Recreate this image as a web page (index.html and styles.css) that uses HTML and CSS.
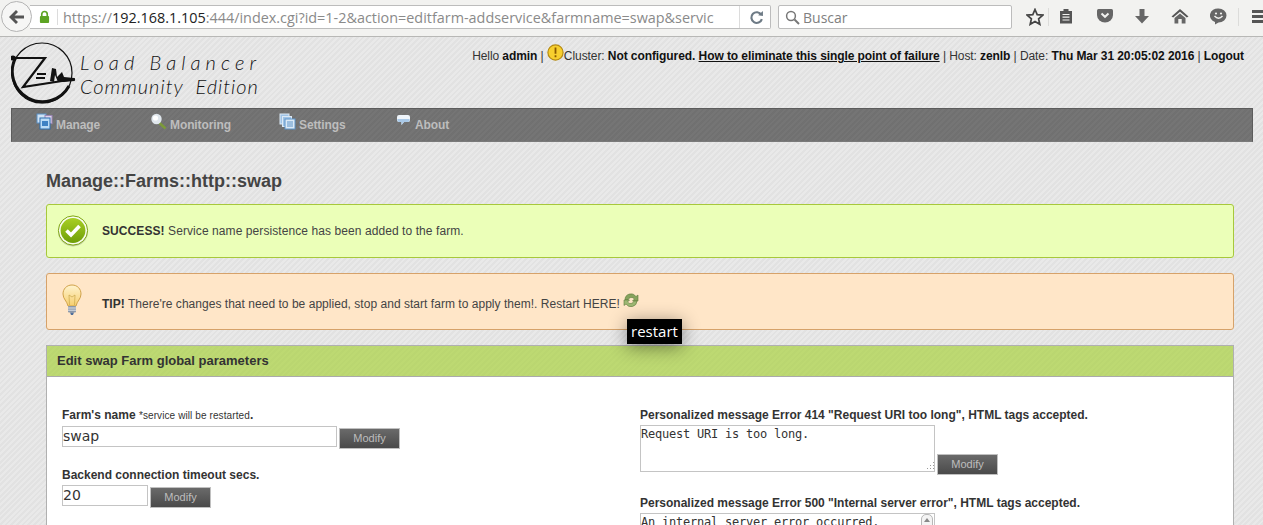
FILE: index.html
```html
<!DOCTYPE html>
<html lang="en">
<head>
<meta charset="UTF-8">
<title>Zen Load Balancer</title>
<link rel="stylesheet" href="styles.css">
</head>
<body>
    <div class="browser-bar">
        <div class="back-btn">
            <svg width="16" height="14" viewBox="0 0 16 14"><path d="M7 0 L0 7 L7 14 L9 12 L5.5 8.6 H15 V5.4 H5.5 L9 2 Z" fill="#555"/></svg>
        </div>
        <div class="url-bar">
            <svg class="lock" width="11" height="14" viewBox="0 0 12 14"><path d="M3 6 V4 a3 3 0 0 1 6 0 V6" fill="none" stroke="#5da423" stroke-width="1.8"/><rect x="1" y="6" width="10" height="7.5" rx="1" fill="#5da423"/></svg>
            <div class="url-sep"></div>
            <div class="url-text">https://<b>192.168.1.105</b>:444/index.cgi?id=1-2&amp;action=editfarm-addservice&amp;farmname=swap&amp;servic</div>
            <div class="reload">
                <svg width="15" height="15" viewBox="0 0 14 14"><path d="M11.5 4.5 A5 5 0 1 0 12 8.5" fill="none" stroke="#6d7a85" stroke-width="2"/><path d="M8.5 5 L13 5.6 L13 1 Z" fill="#6d7a85"/></svg>
            </div>
        </div>
        <div class="search-bar">
            <svg width="15" height="15" viewBox="0 0 15 15"><circle cx="6" cy="6" r="4.4" fill="none" stroke="#777" stroke-width="1.5"/><path d="M9.5 9.5 L14 14" stroke="#777" stroke-width="2"/></svg>
            <span>Buscar</span>
        </div>
        <div class="tool-icons">
            <svg class="tool-star" width="18" height="18" viewBox="0 0 18 18"><path d="M9 1.5 L11.2 6.6 L16.8 7.1 L12.6 10.8 L13.8 16.3 L9 13.4 L4.2 16.3 L5.4 10.8 L1.2 7.1 L6.8 6.6 Z" fill="none" stroke="#444" stroke-width="1.7"/></svg>
            <div class="tool-sep"></div>
            <svg class="tool-clip" width="14" height="16" viewBox="0 0 14 16"><path d="M1 3 H4.5 V1 H9.5 V3 H13 V15.5 H1 Z" fill="#555"/><path d="M3.5 6.5 H10.5 M3.5 9.2 H10.5 M3.5 12 H10.5" stroke="#f2f2f0" stroke-width="1.2"/></svg>
            <svg class="tool-pocket" width="16" height="15" viewBox="0 0 16 15"><path d="M1.5 1 H14.5 Q16 1 16 2.5 V7 A8 7.5 0 0 1 0 7 V2.5 Q0 1 1.5 1 Z" fill="#666"/><path d="M4.5 5.5 L8 8.8 L11.5 5.5" fill="none" stroke="#f2f2f0" stroke-width="2"/></svg>
            <svg class="tool-down" width="16" height="16" viewBox="0 0 16 16"><path d="M5.5 1 H10.5 V8 H15 L8 15.5 L1 8 H5.5 Z" fill="#666"/></svg>
            <svg class="tool-home" width="18" height="16" viewBox="0 0 18 16"><path d="M9 1 L17.5 8.5 L15.8 9.5 L9 3.8 L2.2 9.5 L0.5 8.5 Z" fill="#555"/><path d="M3.5 10 L9 5.4 L14.5 10 V15.5 H10.7 V11 H7.3 V15.5 H3.5 Z" fill="#666"/></svg>
            <svg class="tool-smile" width="17" height="17" viewBox="0 0 17 17"><path d="M8.5 0.5 A8 7 0 0 1 8.5 14.5 L5 16.5 L5 14 A8 7 0 0 1 8.5 0.5 Z" fill="#666"/><circle cx="6" cy="5.5" r="1.1" fill="#f2f2f0"/><circle cx="11" cy="5.5" r="1.1" fill="#f2f2f0"/><path d="M4.5 8 Q8.5 12.5 12.5 8" fill="none" stroke="#f2f2f0" stroke-width="1.4"/></svg>
            <div class="tool-sep tool-sep-end"></div>
            <div class="burger"><i></i><i></i><i></i></div>
        </div>
    </div>

    <div class="page">
        <div class="top">
            <div class="logo">
                <svg width="68" height="68" viewBox="0 0 68 68">
                    <circle cx="31" cy="32" r="30" fill="none" stroke="#111" stroke-width="1.2"/>
                    <path d="M5 16 A30 30 0 0 0 58 45" fill="none" stroke="#111" stroke-width="3"/>
                    <path d="M1 17 L34 17 L12 46 L64 38" fill="none" stroke="#111" stroke-width="2.2"/>
                    <circle cx="2" cy="17" r="2.6" fill="#111"/>
                    <path d="M26 33 H35 M25 37 H34" stroke="#111" stroke-width="2.2"/>
                    <path d="M39 40 L41 27 L45 28 L46 36 L51 31 L53 36 L63 37 L64 40 L52 41 L47 41 L44 34 L43 41 Z" fill="#111"/>
                </svg>
                <div class="logo-text">
                    <div class="logo-line1">Load Balancer</div>
                    <div class="logo-line2">Community&nbsp; Edition</div>
                </div>
            </div>
            <div class="user-line">
                Hello <b>admin</b> |
                <svg class="warn-icon" width="17" height="17" viewBox="0 0 17 17"><circle cx="8.5" cy="8.5" r="7.6" fill="#f7cf2e" stroke="#b58a10" stroke-width="1.2"/><path d="M8.5 3.6 V9.8 M8.5 11.3 V13.2" stroke="#8a5a00" stroke-width="1.8"/></svg><span class="cluster">Cluster: <b>Not configured.</b> <b><u>How to eliminate this single point of failure</u></b> | Host: <b>zenlb</b> | Date: <b>Thu Mar 31 20:05:02 2016</b> | <b>Logout</b></span>
            </div>
        </div>

        <div class="nav">
            <div class="nav-item nav-manage">
                <svg width="17" height="17" viewBox="0 0 17 17"><rect x="1" y="1" width="9" height="9" fill="#cfe2f5" stroke="#5b8fc4"/><rect x="9" y="2.5" width="7" height="8" fill="#e0d4ea" stroke="#9a86b5"/><rect x="4" y="5" width="10" height="11" fill="#bcdcf6" stroke="#2f6fae"/><rect x="6" y="8" width="6" height="5" fill="#3f82c4"/></svg>
                Manage
            </div>
            <div class="nav-item nav-monitoring">
                <svg width="17" height="17" viewBox="0 0 17 17"><path d="M9.5 10 L15.5 15.5" stroke="#7c9a3a" stroke-width="2.6"/><circle cx="6.5" cy="6" r="5.2" fill="#dfe6ec"/><circle cx="5.5" cy="5" r="2.6" fill="#fff"/></svg>
                Monitoring
            </div>
            <div class="nav-item nav-settings">
                <svg width="17" height="17" viewBox="0 0 17 17"><rect x="1" y="1" width="9" height="10" fill="#9fc3e6" stroke="#dbe9f6"/><rect x="3.5" y="3.5" width="9" height="10" fill="#9fc3e6" stroke="#dbe9f6"/><rect x="6" y="6" width="10" height="10" fill="#dbe9f6" stroke="#5d93c8"/><path d="M8 9 H14 M8 11 H14 M8 13 H14" stroke="#5d93c8"/></svg>
                Settings
            </div>
            <div class="nav-item nav-about">
                <svg width="17" height="17" viewBox="0 0 17 17"><path d="M4 2 H13 Q15 2 15 4 V7 Q15 9 13 9 H9 L6.5 12 V9 H4 Q2 9 2 7 V4 Q2 2 4 2 Z" fill="#eef4fa"/><path d="M2.4 6 H14.6 V7 Q14.6 9 13 9 H9 L6.5 12 V9 H4 Q2.4 9 2.4 7 Z" fill="#a9c9e8"/></svg>
                About
            </div>
        </div>

        <div class="content">
            <h1 class="page-title">Manage::Farms::http::swap</h1>

            <div class="notice notice-success">
                <svg class="notice-icon" width="32" height="32" viewBox="0 0 32 32">
                    <defs><linearGradient id="okGrad" x1="0" y1="0" x2="0" y2="1"><stop offset="0" stop-color="#a8cf24"/><stop offset="1" stop-color="#6f9e08"/></linearGradient></defs>
                    <circle cx="16" cy="16.5" r="15" fill="#777" opacity=".35"/>
                    <circle cx="16" cy="15.5" r="14.6" fill="#fafdf0" stroke="#7fa60f"/>
                    <circle cx="16" cy="15.5" r="12.4" fill="url(#okGrad)"/>
                    <path d="M9.5 15.5 L14 20 L22.5 11" fill="none" stroke="#fff" stroke-width="3.6"/>
                </svg>
                <div class="notice-text"><b>SUCCESS!</b> Service name persistence has been added to the farm.</div>
            </div>

            <div class="notice notice-tip">
                <svg class="notice-icon tip-bulb" width="20" height="32" viewBox="0 0 20 32">
                    <defs><linearGradient id="bulbGrad" x1="0" y1="0" x2="0" y2="1"><stop offset="0" stop-color="#fff3cf"/><stop offset="1" stop-color="#f6cf6e"/></linearGradient></defs>
                    <path d="M10 1 C4.5 1 1 5 1 10 C1 15 5 17 6 22 H14 C15 17 19 15 19 10 C19 5 15.5 1 10 1 Z" fill="url(#bulbGrad)" stroke="#d0a24a"/>
                    <path d="M7.5 21 L7 11 L10 13 L13 11 L12.5 21" fill="none" stroke="#c9a64a" stroke-width=".7"/>
                    <rect x="6" y="22" width="8" height="6.5" rx="1" fill="#8b97a8"/>
                    <path d="M6 24 H14 M6 26.2 H14" stroke="#dde3ea"/>
                    <path d="M8 28.5 H12 L11 31 H9 Z" fill="#4f6f9c"/>
                </svg>
                <div class="notice-text tip-text"><b>TIP!</b> There're changes that need to be applied, stop and start farm to apply them!. Restart HERE!
                    <svg class="restart-icon" width="16" height="16" viewBox="0 0 16 16"><path d="M2 8 A6 6 0 0 1 13 4.5 L15 3 V9 H9.5 L11.4 7 A3.6 3.6 0 0 0 5 8 Z" fill="#86a35c" stroke="#5f7a3c" stroke-width=".6"/><path d="M14 9 A6 6 0 0 1 3 12 L1 13.5 V8 H6.5 L4.6 10 A3.6 3.6 0 0 0 11 9 Z" fill="#9db873" stroke="#5f7a3c" stroke-width=".6"/></svg>
                </div>
            </div>

            <div class="panel">
                <div class="panel-header">Edit swap Farm global parameters</div>
                <div class="panel-body">
                    <div class="panel-col">
                        <div class="field">
                            <label class="field-label">Farm's name <span class="small-note">*service will be restarted</span>.</label>
                            <div class="field-row">
                                <input class="text-input wide" type="text" value="swap">
                                <button class="modify-btn">Modify</button>
                            </div>
                        </div>
                        <div class="field">
                            <label class="field-label">Backend connection timeout secs.</label>
                            <div class="field-row">
                                <input class="text-input short" type="text" value="20">
                                <button class="modify-btn">Modify</button>
                            </div>
                        </div>
                    </div>
                    <div class="panel-col">
                        <div class="field">
                            <label class="field-label">Personalized message Error 414 "Request URI too long", HTML tags accepted.</label>
                            <div class="field-row">
                                <div class="area-wrap">
                                    <textarea class="text-area">Request URI is too long.</textarea>
                                    <svg class="grip" width="10" height="9" viewBox="0 0 10 9"><path d="M8 0h1v1H8z M5 3h1v1H5z M8 3h1v1H8z M2 6h1v1H2z M5 6h1v1H5z M8 6h1v1H8z" fill="#999"/></svg>
                                </div>
                                <button class="modify-btn">Modify</button>
                            </div>
                        </div>
                        <div class="field">
                            <label class="field-label">Personalized message Error 500 "Internal server error", HTML tags accepted.</label>
                            <div class="field-row">
                                <div class="area-wrap">
                                    <textarea class="text-area">An internal server error occurred.</textarea>
                                    <div class="scroll-up"></div>
                                </div>
                            </div>
                        </div>
                    </div>
                </div>
            </div>
        </div>

        <div class="tooltip">restart</div>
    </div>
</body>
</html>
```

FILE: styles.css
```css
html, body {
    margin: 0;
    padding: 0;
    height: 525px;
    overflow: hidden;
}
body {
    font-family: "Liberation Sans", Arial, sans-serif;
    font-size: 12px;
    color: #333;
    background-color: #e6e6e6;
}

/* browser toolbar */
.browser-bar {
    height: 31px;
    background-color: #f2f2f0;
    border-bottom: 1px solid #b8b8b6;
    display: flex;
    align-items: flex-start;
    padding-top: 5px;
}
.back-btn {
    width: 29px;
    height: 29px;
    margin: -4px -2px 0 1px;
    border-radius: 50%;
    border: 1px solid #b4b4b4;
    background-color: #f6f6f5;
    display: flex;
    align-items: center;
    justify-content: center;
    position: relative;
    z-index: 1;
    flex: none;
}
.url-bar {
    width: 740px;
    height: 22px;
    background-color: #fff;
    border: 1px solid #bcbcbc;
    border-left: none;
    border-radius: 0 2px 2px 0;
    display: flex;
    align-items: center;
    flex: none;
}
.lock {
    margin-left: 9px;
    flex: none;
}
.url-sep {
    width: 1px;
    height: 16px;
    margin-left: 7px;
    background-color: #dcdcdc;
    flex: none;
}
.url-text {
    font-family: "Open Sans", sans-serif;
    font-size: 14.4px;
    color: #8a8a8a;
    white-space: nowrap;
    overflow: hidden;
    width: 651px;
    margin-left: 5px;
    flex: none;
}
.url-text b {
    font-weight: 400;
    color: #222;
}
.reload {
    border-left: 1px solid #dcdcdc;
    height: 22px;
    margin-left: 25px;
    padding-left: 9px;
    display: flex;
    align-items: center;
}
.search-bar {
    width: 226px;
    height: 22px;
    margin-left: 7px;
    background-color: #fff;
    border: 1px solid #bcbcbc;
    border-radius: 2px;
    display: flex;
    align-items: center;
    padding-left: 6px;
    font-family: "Open Sans", sans-serif;
    font-size: 14px;
    color: #808080;
    flex: none;
}
.search-bar span {
    margin-left: 3px;
}
.tool-icons {
    position: relative;
    flex: 1;
    height: 24px;
}
.tool-icons svg, .tool-sep, .burger {
    position: absolute;
    top: 3px;
}
.tool-star { left: 14px; }
.tool-sep {
    left: 36px;
    width: 1px;
    height: 18px;
    background-color: #dcdcda;
}
.tool-clip { left: 47px; }
.tool-pocket { left: 85px; }
.tool-down { left: 122px; }
.tool-home { left: 159px; }
.tool-smile { left: 198px; }
.tool-sep.tool-sep-end { left: 226px; }
.burger {
    left: 240px;
    width: 15px;
    top: 5px;
}
.burger i {
    display: block;
    height: 3px;
    background-color: #555;
    margin-bottom: 2px;
}

/* page */
.page {
    position: relative;
    height: 488px;
    overflow: hidden;
    background-color: #e7e7e7;
    background-image: repeating-linear-gradient(135deg, #e2e2e2 0, #e2e2e2 2px, #e9e9e9 2px, #e9e9e9 4px);
}
.top {
    display: flex;
    justify-content: space-between;
    height: 71px;
    padding: 0 19px 0 11px;
}
.logo {
    display: flex;
    padding-top: 4px;
}
.logo-text {
    font-family: Lato, sans-serif;
    font-weight: 300;
    font-style: italic;
    color: #111;
    font-size: 20px;
    line-height: 24px;
    margin: 9px 0 0 1px;
}
.logo-line1 {
    letter-spacing: 5.1px;
}
.logo-line2 {
    letter-spacing: 1px;
}
.user-line {
    padding-top: 11px;
    line-height: 16px;
    color: #333;
    white-space: nowrap;
    letter-spacing: -0.08px;
}
.user-line b {
    color: #111;
}
.warn-icon {
    vertical-align: -1px;
    margin-top: -4px;
}
.nav {
    margin: 0 10px 0 11px;
    height: 32px;
    background-color: #757575;
    background-image: repeating-linear-gradient(135deg, rgba(0, 0, 0, .04) 0, rgba(0, 0, 0, .04) 2px, transparent 2px, transparent 4px);
    border: 1px solid #5c5c5c;
    border-bottom-color: #7a7a7a;
    display: flex;
}
.nav-item {
    position: relative;
    color: #bdbdbd;
    font-weight: bold;
    line-height: 31px;
    padding-top: 1px;
    white-space: nowrap;
    letter-spacing: -0.1px;
}
.nav-item svg {
    position: absolute;
    left: -20px;
    top: 4px;
}
.nav-manage { margin-left: 44px; width: 114px; }
.nav-monitoring { width: 129px; }
.nav-settings { width: 116px; }

/* content */
.content {
    padding: 0 29px 0 46px;
}
.page-title {
    font-size: 18px;
    line-height: 22px;
    color: #444;
    margin: 28px 0 12px 0;
}
.notice {
    height: 54px;
    border-radius: 3px;
    border: 1px solid;
    display: flex;
    align-items: center;
    margin-bottom: 15px;
    box-sizing: border-box;
    color: #444;
}
.notice b {
    color: #333;
}
.notice-text {
    letter-spacing: 0.08px;
}
.notice-text.tip-text {
    letter-spacing: 0.03px;
}
.notice-success {
    background-color: #ebffb8;
    border-color: #a7c83b;
}
.notice-tip {
    height: 57px;
    background-color: #ffe6c8;
    border-color: #d6a26a;
}
.notice-icon {
    margin: 0 13px 0 10px;
    flex: none;
}
.tip-bulb {
    margin: -3px 20px 0 15px;
}
.restart-icon {
    vertical-align: 0;
}
.panel {
    background-color: #fff;
    border: 1px solid #b0b0b0;
    height: 300px;
}
.panel-header {
    height: 30px;
    line-height: 29px;
    background-color: #bdd972;
    background-image: repeating-linear-gradient(135deg, rgba(0, 0, 0, .015) 0, rgba(0, 0, 0, .015) 2px, transparent 2px, transparent 4px);
    border-bottom: 1px solid #aaa;
    padding-left: 10px;
    font-size: 13px;
    font-weight: bold;
    color: #333;
}
.panel-body {
    display: grid;
    grid-template-columns: 578px 1fr;
    padding: 31px 0 0 15px;
}
.field {
    margin-bottom: 21px;
}
.field-label {
    display: block;
    font-weight: bold;
    line-height: 14px;
    margin-bottom: 3px;
    color: #333;
}
.small-note {
    font-weight: normal;
    font-size: 10px;
    letter-spacing: 0.1px;
}
.field-row {
    display: flex;
    align-items: flex-end;
}
.text-input {
    font-family: "DejaVu Sans", sans-serif;
    font-size: 14px;
    color: #333;
    height: 21px;
    box-sizing: border-box;
    border: 1px solid #c4c4c4;
    padding: 0 1px 2px 0;
    margin: 0;
    outline: none;
}
.text-input.wide { width: 275px; }
.text-input.short { width: 86px; }
.area-wrap {
    position: relative;
    margin-bottom: 3px;
}
.text-area {
    display: block;
    font-family: "DejaVu Sans Mono", monospace;
    font-size: 12px;
    letter-spacing: -0.22px;
    color: #333;
    width: 295px;
    height: 47px;
    box-sizing: border-box;
    border: 1px solid #c4c4c4;
    padding: 1px 0;
    margin: 0;
    outline: none;
    resize: none;
}
.text-input + .modify-btn {
    margin-bottom: -2px;
}
.modify-btn {
    width: 61px;
    height: 21px;
    margin: 0 0 0 2px;
    padding: 0 0 2px 0;
    border: 1px solid #c0c0c0;
    background-color: #555;
    background-image: linear-gradient(#6a6a6a, #4a4a4a);
    color: #bdbdbd;
    font-family: "Liberation Sans", Arial, sans-serif;
    font-size: 11px;
}
.grip {
    position: absolute;
    right: 0;
    bottom: 1px;
}

/* little scrollbar arrow of the textarea, cut by the window */
.scroll-up {
    position: absolute;
    right: 2px;
    top: 1px;
    width: 10px;
    height: 12px;
    border: 1px solid #b8b8b8;
    border-radius: 5px 5px 2px 2px;
    background-color: #f4f4f4;
}
.scroll-up:after {
    content: "";
    position: absolute;
    left: 2px;
    top: 3px;
    border-left: 3px solid transparent;
    border-right: 3px solid transparent;
    border-bottom: 4px solid #888;
}

/* tooltip shown over the restart icon */
.tooltip {
    position: absolute;
    left: 627px;
    top: 282px;
    width: 55px;
    height: 25px;
    line-height: 24px;
    background-color: #000;
    color: #fff;
    font-family: "Open Sans", sans-serif;
    font-size: 15px;
    text-align: center;
    box-shadow: 0 3px 18px rgba(0, 0, 0, .45);
}
```
